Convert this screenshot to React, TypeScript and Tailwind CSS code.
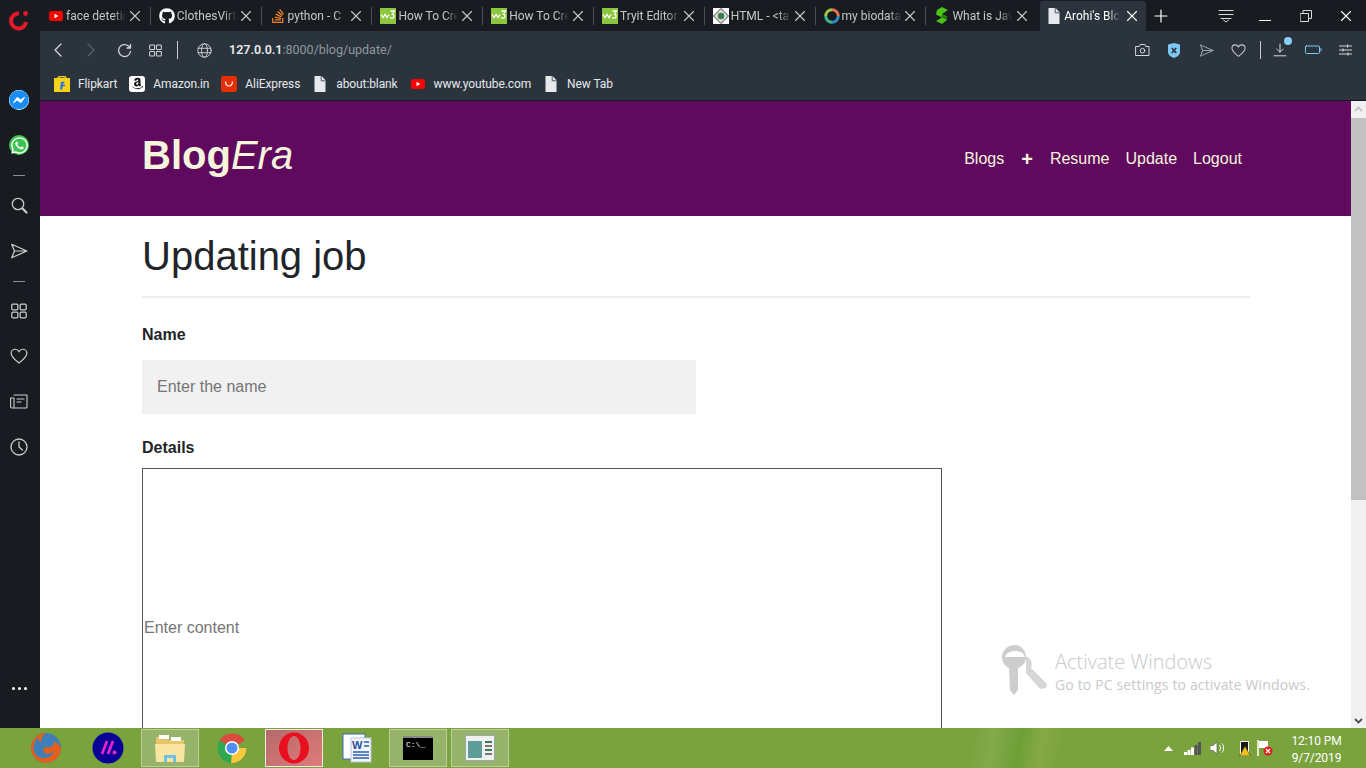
import type { ReactNode } from "react";
import { FaGithub, FaStackOverflow, FaWhatsapp, FaFacebookMessenger, FaAmazon } from "react-icons/fa";

type IconProps = { className?: string };

const line = {
  fill: "none",
  stroke: "currentColor",
  strokeWidth: 1.3,
  strokeLinecap: "round" as const,
  strokeLinejoin: "round" as const,
};

function Youtube() {
  return (
    <svg width="16" height="16" viewBox="0 0 16 16">
      <rect x="1" y="3" width="14" height="10" rx="2.5" fill="#f00" />
      <path d="M6.5 5.8v4.4L10.3 8z" fill="#fff" />
    </svg>
  );
}

function W3() {
  return (
    <svg width="16" height="16" viewBox="0 0 16 16">
      <rect width="16" height="16" fill="#8cc63f" />
      <path d="M1 6.500 3 9.500l2-3 2 3 2-3" fill="none" stroke="#fff" strokeWidth="1.300" />
      <path d="M10.500 3h4l-2 3c2 .3 2.200 4-.3 4.200-.9 0-1.500-.3-1.900-.9" fill="none" stroke="#fff" strokeWidth="1.300" />
    </svg>
  );
}

function Doc() {
  return (
    <svg width="16" height="16" viewBox="0 0 16 16">
      <path d="M2.500 0h7.200l3.800 4.200V16h-11z" fill="#e6e9ee" />
      <path d="M9.200 0v4.800h4.300" fill="none" stroke="#2b343d" strokeWidth=".8" />
    </svg>
  );
}

function TutorialsPoint() {
  return (
    <svg width="16" height="16" viewBox="0 0 16 16">
      <rect width="16" height="16" fill="#fff" />
      <path d="M8 .5 15.500 8 8 15.500.5 8z" fill="#d8dcd8" stroke="#444" />
      <circle cx="8" cy="8" r="3.200" fill="#3f7a4f" />
    </svg>
  );
}

function Ring() {
  return (
    <svg width="16" height="16" viewBox="0 0 16 16" fill="none" strokeWidth="3">
      <path d="M8 1.700A6.300 6.300 0 0 1 14.300 8" stroke="#e8734a" />
      <path d="M14.300 8A6.300 6.300 0 0 1 8 14.300" stroke="#2f8fc4" />
      <path d="M8 14.300A6.300 6.300 0 0 1 1.700 8" stroke="#3fb58e" />
      <path d="M1.700 8A6.300 6.300 0 0 1 8 1.700" stroke="#a5c64a" />
    </svg>
  );
}

function Sharetext() {
  return (
    <svg width="16" height="18" viewBox="0 0 16 18">
      <path d="M3 3 8 0l6 3-6 4 5 2.500V13l-5 4-6-3 6-3.500-6-3z" fill="#4cc417" />
      <path d="M8 7l5 2.500V13L8 10.500z" fill="#1f7f12" />
    </svg>
  );
}

function Flipkart() {
  return (
    <svg width="16" height="16" viewBox="0 0 16 16">
      <rect y="2" width="16" height="14" fill="#f8d21a" />
      <path d="M4 2c0-2 8-2 8 0" fill="none" stroke="#f8d21a" strokeWidth="1.500" />
      <path d="M10.500 5.500 7 6l-1 7 2 1 .7-3.500 2.300-.5.300-1.500-2.300.3.200-1.300 1-.2z" fill="#2874f0" />
    </svg>
  );
}

function Ali() {
  return (
    <svg width="16" height="16" viewBox="0 0 16 16">
      <rect width="16" height="16" rx="2" fill="#e62e04" />
      <path d="M4.500 5.500c.4 6 6.600 6 7 0" fill="none" stroke="#fff" strokeWidth="1.200" />
    </svg>
  );
}

function X({ className }: IconProps) {
  return (
    <svg width="12" height="12" viewBox="0 0 12 12" className={className} {...line} strokeWidth={1.100}>
      <path d="M1.500 1.500l9 9M10.500 1.500l-9 9" />
    </svg>
  );
}

function Send({ size = 16, className }: IconProps & { size?: number }) {
  return (
    <svg width={size} height={size} viewBox="0 0 16 16" className={className} {...line} strokeWidth={1.100}>
      <path d="M1.500 2 15 8 1.500 14 4 8zM4 8h11" />
    </svg>
  );
}

function Heart({ size = 16, className }: IconProps & { size?: number }) {
  return (
    <svg width={size} height={size} viewBox="0 0 16 16" className={className} {...line} strokeWidth={1.100}>
      <path d="M8 14.200C3.500 10.800 1 8.600 1 5.600 1 3.400 2.700 2 4.500 2 6 2 7.300 2.800 8 4.200 8.700 2.800 10 2 11.500 2 13.300 2 15 3.400 15 5.600c0 3-2.500 5.200-7 8.600z" />
    </svg>
  );
}

function Grid({ size = 14, className }: IconProps & { size?: number }) {
  return (
    <svg width={size} height={size} viewBox="0 0 14 14" className={className} {...line} strokeWidth={1.100}>
      <rect x=".7" y="1" width="5.300" height="5" rx="1" />
      <rect x="8" y="1" width="5.300" height="5" rx="1" />
      <rect x=".7" y="8" width="5.300" height="5" rx="1" />
      <rect x="8" y="8" width="5.300" height="5" rx="1" />
    </svg>
  );
}

const TABS: { title: string; icon: ReactNode }[] = [
  { title: "face detetic", icon: <Youtube /> },
  { title: "ClothesVirt", icon: <FaGithub size={16} color="#fff" /> },
  { title: "python - C", icon: <FaStackOverflow size={16} color="#f48024" /> },
  { title: "How To Cre", icon: <W3 /> },
  { title: "How To Cre", icon: <W3 /> },
  { title: "Tryit Editor", icon: <W3 /> },
  { title: "HTML - <ta", icon: <TutorialsPoint /> },
  { title: "my biodata", icon: <Ring /> },
  { title: "What is Jav", icon: <Sharetext /> },
];

const BOOKMARKS: { title: string; icon: ReactNode }[] = [
  { title: "Flipkart", icon: <Flipkart /> },
  {
    title: "Amazon.in",
    icon: (
      <span className="flex h-4 w-4 items-center justify-center rounded-[3px] bg-white">
        <FaAmazon size={13} color="#111" />
      </span>
    ),
  },
  { title: "AliExpress", icon: <Ali /> },
  { title: "about:blank", icon: <Doc /> },
  { title: "www.youtube.com", icon: <Youtube /> },
  { title: "New Tab", icon: <Doc /> },
];

function Tab({ title, icon, last }: { title: string; icon: ReactNode; last: boolean }) {
  return (
    <div className={`flex h-[18px] w-[110.800px] shrink-0 items-center pl-2 pr-[9px] ${last ? "" : "border-r border-[#4a4f55]"}`}>
      <span className="flex w-4 shrink-0 justify-center">{icon}</span>
      <span className="ml-[2px] w-[60px] shrink-0 whitespace-nowrap text-[12px] text-[#c4c6c8] [mask-image:linear-gradient(to_right,black_78%,transparent_100%)]">
        {title}
      </span>
      <X className="ml-auto text-[#c8cacc]" />
    </div>
  );
}

function TabStrip() {
  return (
    <div className="flex h-[31px] items-center bg-[#181c21]">
      {TABS.map((tab, i) => (
        <Tab key={i} title={tab.title} icon={tab.icon} last={i === TABS.length - 1} />
      ))}
      <div className="ml-[3px] flex h-[30px] w-[106px] shrink-0 items-center self-end rounded-t-[3px] bg-[#2b343d] pl-[6px] pr-[8px]">
        <Doc />
        <span className="ml-[2px] w-[56px] whitespace-nowrap text-[12px] text-white [mask-image:linear-gradient(to_right,black_78%,transparent_100%)]">
          Arohi's Blo
        </span>
        <X className="ml-auto text-white" />
      </div>
      <svg width="14" height="14" viewBox="0 0 14 14" className="ml-2 text-white" {...line} strokeWidth={1.200}>
        <path d="M7 1v12M1 7h12" />
      </svg>
      <div className="ml-auto flex items-center text-[#d8dadc]">
        <svg width="16" height="14" viewBox="0 0 16 14" {...line} strokeWidth={1}>
          <path d="M1 1.500h14M1 5.500h14M3 9.500h10M5.500 11l2.500 2 2.500-2" />
        </svg>
        <span className="ml-[25px] mt-[10px] h-px w-3 bg-white" />
        <svg width="12" height="12" viewBox="0 0 12 12" className="ml-[29px]" {...line} strokeWidth={1}>
          <path d="M.5 3.500h8v8h-8zM3 3.500v-3h8.500v8h-3" />
        </svg>
        <X className="ml-[28px] mr-[14px] text-white" />
      </div>
    </div>
  );
}

function AddressBar() {
  return (
    <div className="flex h-[38px] items-center text-[#d3d7da]">
      <svg width="12" height="14" viewBox="0 0 12 14" className="ml-3" {...line}>
        <path d="M9 1 3 7l6 6" />
      </svg>
      <svg width="12" height="14" viewBox="0 0 12 14" className="ml-[21px] text-[#59626b]" {...line}>
        <path d="m3 1 6 6-6 6" />
      </svg>
      <svg width="15" height="15" viewBox="0 0 15 15" className="ml-[20px]" {...line}>
        <path d="M13.500 8.500A6 6 0 1 1 11.500 3L13.500 5V1.500M13.500 5H10" />
      </svg>
      <Grid size={13} className="ml-[17px]" />
      <span className="ml-[15px] h-[18px] w-px bg-[#c6cacd]" />
      <svg width="15" height="15" viewBox="0 0 15 15" className="ml-[19px]" {...line} strokeWidth={.9}>
        <circle cx="7.500" cy="7.500" r="6.700" />
        <ellipse cx="7.500" cy="7.500" rx="3" ry="6.700" />
        <path d="M1.200 5.300h12.600M1.200 9.700h12.600" />
      </svg>
      <span className="ml-[17px] text-[12.500px] text-[#8f979e]">
        <span className="font-semibold text-[#e7e9eb]">127.0.0.1</span>:8000/blog/update/
      </span>
      <div className="ml-auto flex items-center">
        <svg width="15" height="14" viewBox="0 0 15 14" {...line} strokeWidth={1}>
          <path d="M1 3.500h3.200L5.200 1.500h4.600l1 2H14v9H1z" />
          <circle cx="7.500" cy="7.700" r="2.300" />
        </svg>
        <svg width="14" height="15" viewBox="0 0 14 15" className="ml-[17px]">
          <path d="M1 1.500 7 0l6 1.500V9c0 3-3 5-6 6-3-1-6-3-6-6z" fill="#7cc8f2" />
          <path d="m4.800 5 4.400 5M9.200 5l-4.400 5" stroke="#2b343d" strokeWidth="1.600" />
        </svg>
        <Send size={15} className="ml-[18px] text-[#98a1a8]" />
        <Heart size={15} className="ml-[17px] text-[#c4c8cb]" />
        <span className="ml-[14px] h-[18px] w-px bg-[#c6cacd]" />
        <span className="relative ml-[12px]">
          <svg width="14" height="14" viewBox="0 0 14 14" {...line} strokeWidth={1}>
            <path d="M7 1v8M3.800 6 7 9.200 10.200 6M1 12.800h12" />
          </svg>
          <span className="absolute -right-[5px] -top-[6px] h-2 w-2 rounded-full bg-[#87cff8]" />
        </span>
        <svg width="17" height="10" viewBox="0 0 17 10" className="ml-[18px] text-[#7cc8f2]" {...line} strokeWidth={1}>
          <rect x=".5" y="1" width="14" height="7.500" rx="1" />
          <path d="M16 3.500v2.500" />
        </svg>
        <svg width="13" height="12" viewBox="0 0 13 12" className="ml-[17px] mr-[14px]" {...line} strokeWidth={1}>
          <path d="M.5 2h12M.5 6h12M.5 10h12M8.500 .8v2.400M4 4.800v2.400M9 8.800v2.400" />
        </svg>
      </div>
    </div>
  );
}

function BookmarkBar() {
  return (
    <div className="flex h-[29px] items-center gap-3 pl-[14px]">
      {BOOKMARKS.map((b) => (
        <div key={b.title} className="flex items-center gap-2">
          <span className="flex w-4 justify-center">{b.icon}</span>
          <span className="text-[12px] tracking-[-.1px] text-[#e4e8ec]">{b.title}</span>
        </div>
      ))}
    </div>
  );
}

function SideSlot({ h, children }: { h: string; children: ReactNode }) {
  return <div className={`flex w-full shrink-0 items-center justify-center ${h}`}>{children}</div>;
}

function Sidebar() {
  return (
    <aside className="flex w-10 shrink-0 flex-col bg-[#181c21] pr-[2px] text-[#c9cccf]">
      <div className="flex h-[40px] items-center justify-center">
        <svg width="22" height="22" viewBox="0 0 22 22" fill="none">
          <path d="M11 4.500A7.500 7.500 0 1 0 18 13" stroke="#e8172c" strokeWidth="4" />
          <circle cx="17.500" cy="4.500" r="2.400" fill="#e8172c" />
        </svg>
      </div>
      <div className="h-[37px]" />
      <SideSlot h="h-[46px]">
        <span className="flex h-5 w-5 items-center justify-center rounded-full bg-gradient-to-b from-[#1fb4ff] to-[#0a6fe0]">
          <FaFacebookMessenger size={20} color="#1a8cf5" className="rounded-full bg-white" />
        </span>
      </SideSlot>
      <SideSlot h="h-[44px]">
        <span className="flex h-5 w-5 items-center justify-center rounded-full bg-[#3fc351]">
          <FaWhatsapp size={19} color="#fff" />
        </span>
      </SideSlot>
      <SideSlot h="h-[16px]">
        <span className="h-px w-3 bg-[#8b8f93]" />
      </SideSlot>
      <SideSlot h="h-[44px]">
        <svg width="17" height="17" viewBox="0 0 17 17" {...line}>
          <circle cx="7" cy="7" r="5.700" />
          <path d="M11.500 11.500l4 4" strokeWidth="2.200" />
        </svg>
      </SideSlot>
      <SideSlot h="h-[48px]">
        <Send size={18} />
      </SideSlot>
      <SideSlot h="h-[12px]">
        <span className="h-px w-3 bg-[#8b8f93]" />
      </SideSlot>
      <SideSlot h="h-[48px]">
        <Grid size={16} />
      </SideSlot>
      <SideSlot h="h-[42px]">
        <Heart size={18} />
      </SideSlot>
      <SideSlot h="h-[48px]">
        <svg width="18" height="15" viewBox="0 0 18 15" {...line} strokeWidth={1.100}>
          <path d="M4 1h13v12a1 1 0 0 1-1 1H2a1.500 1.500 0 0 1-1.400-1.500V4H4v9M7 5h7M7 8h4" />
        </svg>
      </SideSlot>
      <SideSlot h="h-[44px]">
        <svg width="18" height="18" viewBox="0 0 18 18" {...line}>
          <circle cx="9" cy="9" r="8" />
          <path d="M9 4v5l3.500 3" />
        </svg>
      </SideSlot>
      <div className="mt-auto flex h-[80px] justify-center gap-[3px] pt-[39px]">
        <span className="h-[3px] w-[3px] rounded-full bg-white" />
        <span className="h-[3px] w-[3px] rounded-full bg-white" />
        <span className="h-[3px] w-[3px] rounded-full bg-white" />
      </div>
    </aside>
  );
}

function PageContent() {
  return (
    <div className="relative min-h-0 flex-1 overflow-hidden bg-white font-['Liberation_Sans',sans-serif]">
      <header className="flex h-[115px] items-start justify-between bg-[#5f095f] pl-[102px] pr-[124px] text-[#f5f5dc]">
        <div className="mt-[27px] text-[40px] leading-[54px]">
          <span className="font-bold">Blog</span>
          <span className="italic">Era</span>
        </div>
        <nav className="mt-[47px] flex items-center text-[16px] leading-[22px]">
          <span>Blogs</span>
          <span className="ml-[17px] text-[20px] font-bold leading-[22px]">+</span>
          <span className="ml-[17px]">Resume</span>
          <span className="ml-4">Update</span>
          <span className="ml-4">Logout</span>
        </nav>
      </header>
      <main className="ml-[102px] w-[1108px]">
        <h1 className="border-b-2 border-[#eeeeee] pb-[16px] pt-[16px] text-[40px] leading-[48px] text-[#212529]">
          Updating job
        </h1>
        <form className="flex flex-col">
          <label className="mt-[26px] text-[16px] font-bold leading-[22px] text-[#212529]">Name</label>
          <input
            readOnly
            placeholder="Enter the name"
            className="mt-[14px] h-[54px] w-[554px] bg-[#f1f1f1] px-[15px] text-[16px] outline-none placeholder:text-[#757575]"
          />
          <label className="mt-[23px] text-[16px] font-bold leading-[22px] text-[#212529]">Details</label>
          <input
            readOnly
            placeholder="Enter content"
            className="mt-[9px] h-[320px] w-[800px] shrink-0 border border-[#555] px-px text-[16px] outline-none placeholder:text-[#757575]"
          />
        </form>
      </main>

      {/* watermark sits over the page */}
      <div className="absolute left-[962px] top-[543px] flex font-['Open_Sans',sans-serif] text-[#c9c9c9]">
        <svg width="50" height="52" viewBox="0 0 50 52" className="mr-[3px]">
          <path d="M13 1C5 1 0 7 0 13c0 5 3 9 7 11l1 22 4 5 4-5V24c5-2 8-6 8-11C24 7 19 1 13 1z" fill="#cdcdcd" />
          <path d="M3 13c2-8 18-8 20 0z" fill="#fff" />
          <path d="M24 12c5 3 7 7 5 12l16 16-1 4-6 1-14-16" fill="#d6d6d6" />
        </svg>
        <div className="pt-[4px]">
          <div className="text-[20px] font-light leading-[27px]">Activate Windows</div>
          <div className="text-[14px] leading-[19px] tracking-[.15px]">Go to PC settings to activate Windows.</div>
        </div>
      </div>

      {/* page scrollbar */}
      <div className="absolute bottom-0 right-0 top-0 flex w-[15px] flex-col items-center bg-[#f1f1f1]">
        <svg width="9" height="6" viewBox="0 0 9 6" className="mt-[5px]">
          <path d="M1 5l3.500-3.500L8 5" fill="none" stroke="#c4c4c4" strokeWidth="1.800" />
        </svg>
        <div className="mt-[6px] h-[382px] w-full bg-[#c1c1c1]" />
        <svg width="9" height="6" viewBox="0 0 9 6" className="mb-[4px] mt-auto">
          <path d="M1 1l3.500 3.500L8 1" fill="none" stroke="#505050" strokeWidth="1.800" />
        </svg>
      </div>
    </div>
  );
}

function TaskItem({ boxed, children }: { boxed?: "plain" | "active"; children: ReactNode }) {
  const box =
    boxed === "active"
      ? "border border-[#f0e8e8] bg-gradient-to-br from-[#b56a6a] to-[#e07a7a]"
      : boxed === "plain"
        ? "border border-[#bccf9c] bg-[#95b36a]"
        : "";
  return (
    <div className="flex h-10 w-[62px] shrink-0 items-center justify-center">
      <div className={`flex h-[38px] w-[58px] items-center justify-center ${box}`}>{children}</div>
    </div>
  );
}

function Taskbar() {
  return (
    <footer className="flex h-10 shrink-0 items-center bg-[#7aa33e] bg-[linear-gradient(100deg,#7aa33e_0%,#7aa33e_71%,#84a94a_72.500%,#6c9f36_74.500%,#86a946_76%,#7aa33e_77.500%,#7aa33e_100%)] pl-[15px] font-['Roboto',sans-serif]">
      <TaskItem>
        <svg width="32" height="32" viewBox="0 0 32 32">
          <circle cx="16" cy="16" r="15" fill="#3e7fb8" />
          <path d="M16 1a15 15 0 1 0 15 15c-2-5-5-4-7-8 1 5-2 8-7 7-4 0-5 4-2 6 3 2 8 0 9-3-1 8-12 11-18 5C2 18 3 9 9 5c-1 3 0 5 2 5 0-4 2-7 5-9z" fill="#e2601b" />
        </svg>
      </TaskItem>
      <TaskItem>
        <svg width="32" height="32" viewBox="0 0 32 32">
          <circle cx="16" cy="16" r="15.500" fill="#0b0095" />
          <path d="M15 9 10 22M21 9l-5 13" stroke="#f01fd8" strokeWidth="2.600" />
          <circle cx="22.500" cy="20.500" r="2" fill="#f01fd8" />
        </svg>
      </TaskItem>
      <TaskItem boxed="plain">
        <svg width="32" height="30" viewBox="0 0 32 30">
          <path d="M2 4h10l2 3h16v20H2z" fill="#e8c56a" />
          <rect x="5" y="2" width="10" height="4" fill="#fff" />
          <rect x="17" y="4" width="10" height="4" fill="#fff" />
          <path d="M1 11h30l-1 18H2z" fill="#f8e6a0" />
          <path d="M10 29v-7h12v7h-3v-4h-6v4z" fill="#6fc0e8" />
        </svg>
      </TaskItem>
      <TaskItem>
        <svg width="30" height="30" viewBox="0 0 30 30">
          <path d="M15 15 2.500 7.500A15 15 0 0 1 28 7.500z" fill="#dc4a3d" />
          <path d="M15 15h14.500A15 15 0 0 1 14 30z" fill="#f7c93e" />
          <path d="M15 15 14 30A15 15 0 0 1 2.500 7.500z" fill="#30a750" />
          <circle cx="15" cy="15" r="7" fill="#fff" />
          <circle cx="15" cy="15" r="5.500" fill="#4f8ff0" />
        </svg>
      </TaskItem>
      <TaskItem boxed="active">
        <svg width="30" height="32" viewBox="0 0 30 32">
          <path
            fillRule="evenodd"
            d="M15 .5C6.700.5 0 7.400 0 16s6.700 15.500 15 15.500S30 24.600 30 16 23.300.5 15 .5zM15 4c3.700 0 6.500 5.400 6.500 12S18.700 28 15 28 8.500 22.600 8.500 16 11.300 4 15 4z"
            fill="#e8101f"
          />
        </svg>
      </TaskItem>
      <TaskItem>
        <svg width="32" height="32" viewBox="0 0 32 32">
          <rect x="3" y="2" width="22" height="25" fill="#fff" stroke="#3a6cb8" />
          <rect x="11" y="6" width="20" height="24" fill="#f4f6fb" stroke="#b9c6dc" />
          <text x="12" y="17" fontSize="11" fontWeight="700" fill="#1f4fa0" fontFamily="Liberation Sans">W</text>
          <path d="M13 20h16M13 23h16M13 26h16M24 10h5M24 14h5" stroke="#2a5cac" strokeWidth="1.500" />
        </svg>
      </TaskItem>
      <TaskItem boxed="plain">
        <span className="flex h-6 w-[30px] flex-col border-t-2 border-[#888] bg-black pl-[3px] pt-[2px] font-['Liberation_Mono',monospace] text-[8px] leading-[9px] text-white">
          C:\_
        </span>
      </TaskItem>
      <TaskItem boxed="plain">
        <svg width="30" height="26" viewBox="0 0 30 26">
          <rect x=".5" y=".5" width="29" height="25" fill="#eef1f0" stroke="#9aa" />
          <rect x="3" y="6" width="14" height="17" fill="#5f9e98" />
          <rect x="20" y="6" width="7" height="2" fill="#3c7a50" />
          <rect x="20" y="10" width="7" height="2" fill="#777" />
          <rect x="20" y="14" width="7" height="2" fill="#3c7a50" />
          <rect x="20" y="18" width="7" height="2" fill="#777" />
        </svg>
      </TaskItem>
      <div className="ml-auto flex items-center text-white">
        <svg width="9" height="5" viewBox="0 0 9 5"><path d="M4.500 0 9 5H0z" fill="#fff" /></svg>
        <svg width="17" height="13" viewBox="0 0 17 13" className="ml-[11px]">
          <rect x="0" y="10" width="3" height="3" fill="#fff" />
          <rect x="3.500" y="8" width="3" height="5" fill="#fff" />
          <rect x="7" y="5.500" width="3" height="7.500" fill="#fff" />
          <rect x="10.500" y="3" width="3" height="10" fill="#555" />
          <rect x="14" y="0" width="3" height="13" fill="#555" />
        </svg>
        <svg width="16" height="14" viewBox="0 0 16 14" className="ml-[9px]">
          <path d="M0 4.500h3L7 1v12L3 9.500H0z" fill="#fff" stroke="#444" strokeWidth=".6" />
          <path d="M9.500 4c1.300 1.800 1.300 4.200 0 6M12 2.500c2.200 2.600 2.200 6.400 0 9" fill="none" stroke="#fff" />
        </svg>
        <svg width="12" height="16" viewBox="0 0 12 16" className="ml-[13px]">
          <rect x="1.500" y="1.500" width="8" height="14" fill="#1a1a1a" stroke="#fff" />
          <path d="M6 6 11.500 16H.500z" fill="#f2c01e" stroke="#222" strokeWidth=".5" />
        </svg>
        <svg width="16" height="16" viewBox="0 0 16 16" className="ml-[6px]">
          <path d="M1 0v16" stroke="#fff" strokeWidth="1.500" />
          <path d="M2 1h9v7H2z" fill="#fff" />
          <circle cx="11" cy="11" r="4.500" fill="#e02020" />
          <path d="m9 9 4 4M13 9l-4 4" stroke="#fff" strokeWidth="1.200" />
        </svg>
        <div className="ml-[19px] mr-[25px] flex w-[49px] flex-col items-center pt-[3px] text-[12px] leading-[17px] tracking-[-.1px]">
          <span className="whitespace-nowrap">12:10 PM</span>
          <span>9/7/2019</span>
        </div>
      </div>
    </footer>
  );
}

export default function App() {
  return (
    <div className="flex h-[768px] w-[1366px] flex-col overflow-hidden bg-[#181c21] font-['Roboto',sans-serif]">
      <div className="flex min-h-0 flex-1">
        <Sidebar />
        <div className="flex min-w-0 flex-1 flex-col">
          <TabStrip />
          <div className="h-[70px] shrink-0 border-b border-[#15181c] bg-[#2b343d]">
            <AddressBar />
            <BookmarkBar />
          </div>
          <PageContent />
        </div>
      </div>
      <Taskbar />
    </div>
  );
}
